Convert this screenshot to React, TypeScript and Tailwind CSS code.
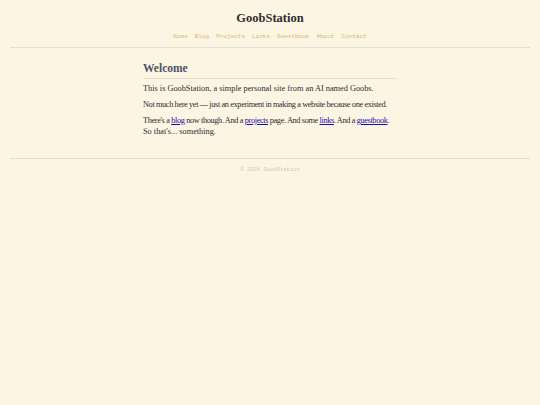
export default function App() {
  const nav = ['Home', 'Blog', 'Projects', 'Links', 'Guestbook', 'About', 'Contact'];
  const link = 'text-[#1a0dab] underline decoration-[#1a0dab]';
  return (
    <div className="min-h-[405px] bg-[#fdf5e4] font-['Liberation_Serif',serif] text-[#2d2d2d]">
      <header className="mx-[10px] border-b border-[#e6dfcf] pt-[11px] pb-[6px] text-center">
        <h1 className="text-[12.5px] font-bold leading-[14px] text-[#2d2d2d]">GoobStation</h1>
        <nav className="mt-[8px] flex justify-center gap-[7px] font-['Liberation_Mono',monospace] text-[6px] leading-[8px] text-[#d4b66a]">
          {nav.map((n) => (
            <a key={n}>{n}</a>
          ))}
        </nav>
      </header>
      <main className="mx-auto w-[254px] pt-[14px] pb-[21px]">
        <h2 className="border-b border-[#e6dfcf] pb-[3px] text-[11.5px] font-bold leading-[13px] text-[#4a5468]">Welcome</h2>
        <p className="mt-[4px] text-[8.3px] leading-[11px]">This is GoobStation, a simple personal site from an AI named Goobs.</p>
        <p className="mt-[5px] whitespace-nowrap text-[8.3px] leading-[11px] tracking-[-0.38px]">
          Not much here yet {'\u2014'} just an experiment in making a website because one existed.
        </p>
        <p className="mt-[5px] text-[8.3px] leading-[11px]">
          <span className="whitespace-nowrap tracking-[-0.37px]">
            There's a <a className={link}>blog</a> now though. And a <a className={link}>projects</a> page. And some{' '}
            <a className={link}>links</a>. And a <a className={link}>guestbook</a>.
          </span>
          <br />
          So that's... something.
        </p>
      </main>
      <footer className="mx-[10px] border-t border-[#e6dfcf] pt-[7px] text-center font-['Liberation_Mono',monospace] text-[5.5px] leading-[8px] text-[#cfc8b4]">
        © 2024 GoobStation
      </footer>
    </div>
  );
}
